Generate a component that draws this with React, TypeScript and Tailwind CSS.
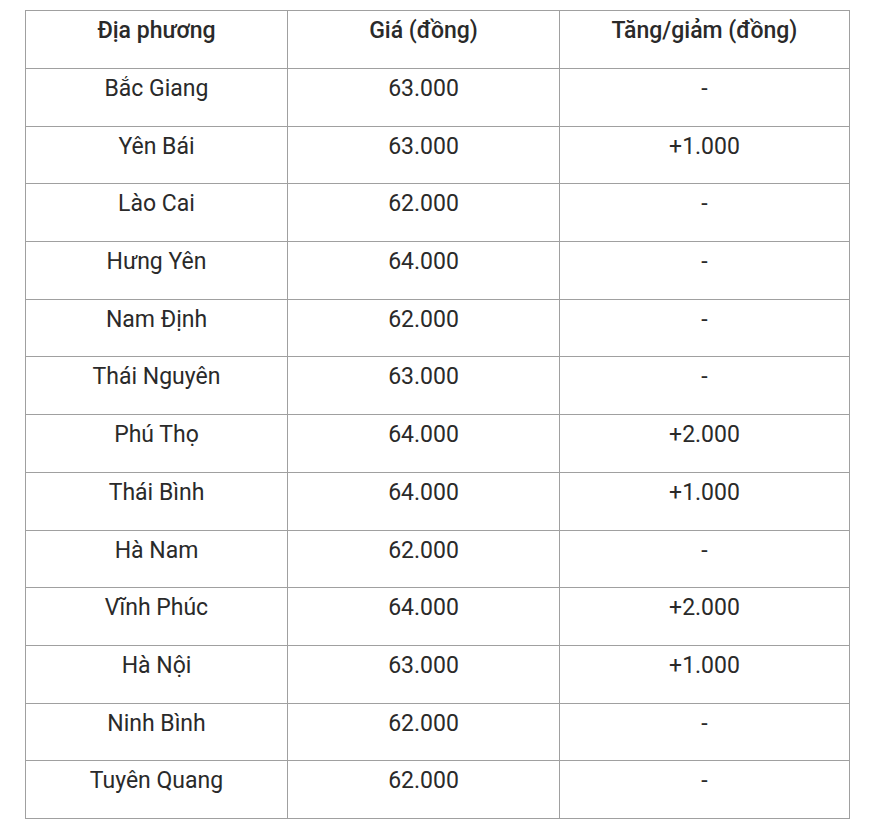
const rows: [string, string, string][] = [
  ['Bắc Giang', '63.000', '-'],
  ['Yên Bái', '63.000', '+1.000'],
  ['Lào Cai', '62.000', '-'],
  ['Hưng Yên', '64.000', '-'],
  ['Nam Định', '62.000', '-'],
  ['Thái Nguyên', '63.000', '-'],
  ['Phú Thọ', '64.000', '+2.000'],
  ['Thái Bình', '64.000', '+1.000'],
  ['Hà Nam', '62.000', '-'],
  ['Vĩnh Phúc', '64.000', '+2.000'],
  ['Hà Nội', '63.000', '+1.000'],
  ['Ninh Bình', '62.000', '-'],
  ['Tuyên Quang', '62.000', '-'],
];

const App = () => {
  return (
    <div className="min-h-screen bg-white pt-[10px] pl-[25px]" style={{ fontFamily: 'Roboto, sans-serif' }}>
      <table className="border-collapse table-fixed w-[824px] text-[23px] leading-[30px] text-[#2a2a2a]">
        <colgroup>
          <col className="w-[262px]" />
          <col className="w-[272px]" />
          <col className="w-[290px]" />
        </colgroup>
        <thead>
          <tr className="h-[58px]">
            <th className="border border-[#a0a0a0] align-top pt-[5px] font-medium text-center">Địa phương</th>
            <th className="border border-[#a0a0a0] align-top pt-[5px] font-medium text-center">Giá (đồng)</th>
            <th className="border border-[#a0a0a0] align-top pt-[5px] font-medium text-center">Tăng/giảm (đồng)</th>
          </tr>
        </thead>
        <tbody>
          {rows.map((r, i) => (
            <tr key={i} className="h-[57.7px]">
              <td className="border border-[#a0a0a0] align-top pt-[5px] text-center">{r[0]}</td>
              <td className="border border-[#a0a0a0] align-top pt-[5px] text-center">{r[1]}</td>
              <td className="border border-[#a0a0a0] align-top pt-[5px] text-center">{r[2]}</td>
            </tr>
          ))}
        </tbody>
      </table>
    </div>
  );
};

export default App;
